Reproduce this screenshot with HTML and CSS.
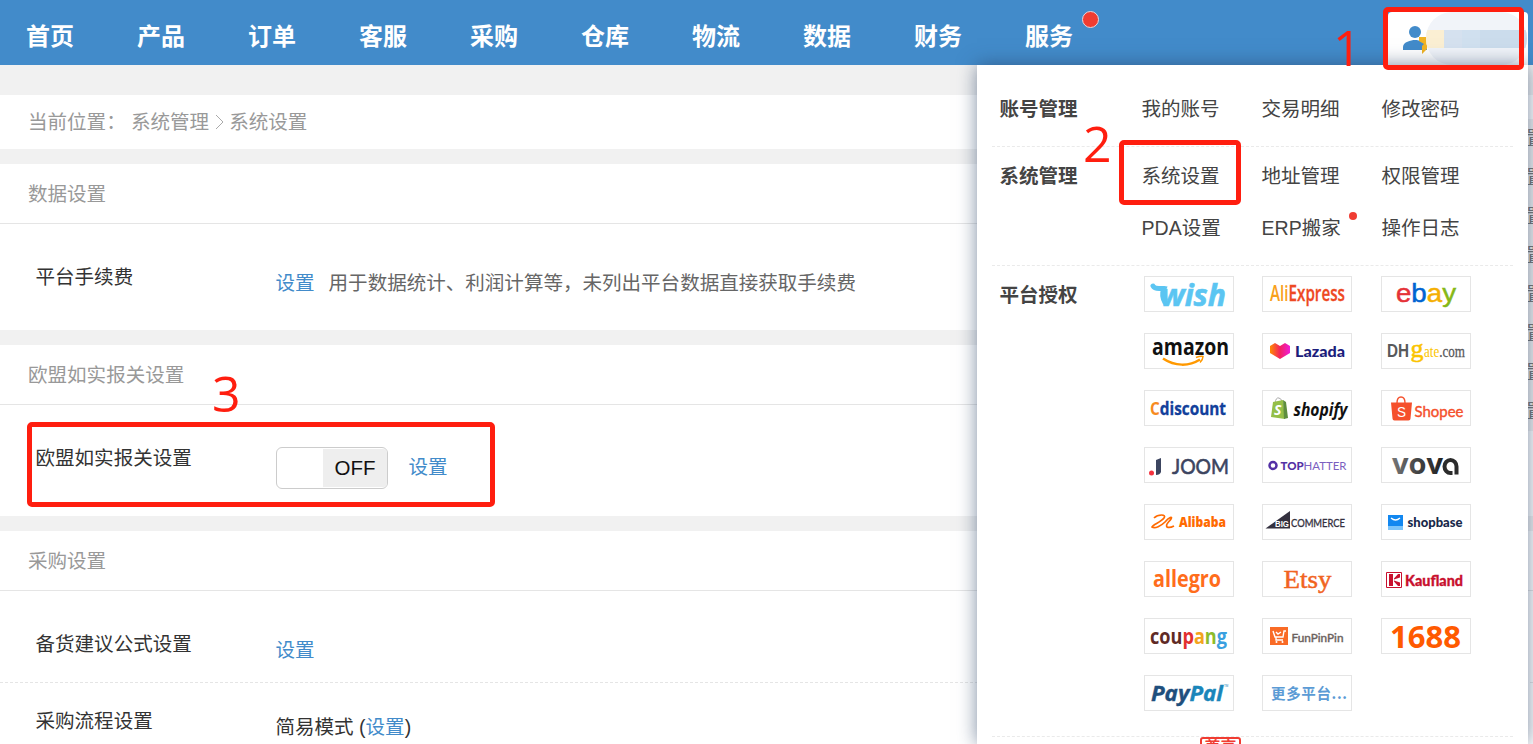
FILE: index.html
```html
<!DOCTYPE html>
<html lang="zh-CN">
<head>
  <meta charset="UTF-8">
  <meta name="viewport" content="width=device-width, initial-scale=1.0">
  <title>系统设置</title>
  <link rel="stylesheet" href="styles.css">
</head>
<body>
  <header class="navbar">
    <nav class="nav">
      <a>首页</a>
      <a>产品</a>
      <a>订单</a>
      <a>客服</a>
      <a>采购</a>
      <a>仓库</a>
      <a>物流</a>
      <a>数据</a>
      <a>财务</a>
      <a class="has-dot">服务</a>
    </nav>
    <div class="user">
      <svg class="user-icon" width="26" height="30" viewBox="0 0 26 30">
        <circle cx="12" cy="6" r="6" fill="#428bca"/>
        <path d="M0 24v-3c0-5 8-7 12-7s12 2 12 7v3z" fill="#428bca"/>
        <path d="M16 11h8v12l-5 5v-8l2-2-5-3z" fill="#f0b323"/>
      </svg>
      <div class="user-name">
        <i class="m1"></i><i class="m2"></i><i class="m3"></i><i class="m4"></i>
      </div>
    </div>
  </header>

  <main class="content">
    <div class="crumb">
      <span class="crumb-label">当前位置：</span>
      <span>系统管理</span>
      <svg width="9" height="16" viewBox="0 0 9 16"><path d="M1 1l7 7-7 7" fill="none" stroke="#aaa"/></svg>
      <span>系统设置</span>
    </div>

    <section class="card">
      <h2>数据设置</h2>
      <div class="row row-fee">
        <label>平台手续费</label>
        <div class="value"><a>设置</a><span class="hint">用于数据统计、利润计算等，未列出平台数据直接获取手续费</span></div>
      </div>
    </section>

    <section class="card">
      <h2>欧盟如实报关设置</h2>
      <div class="row row-eu">
        <label>欧盟如实报关设置</label>
        <div class="value">
          <div class="switch"><span>OFF</span></div>
          <a>设置</a>
        </div>
      </div>
    </section>

    <section class="card">
      <h2>采购设置</h2>
      <div class="row row-stock">
        <label>备货建议公式设置</label>
        <div class="value"><a>设置</a></div>
      </div>
      <div class="row row-flow">
        <label>采购流程设置</label>
        <div class="value">简易模式 (<a>设置</a>)</div>
      </div>
    </section>
  </main>

  <aside class="side">
    <span>置</span><span>置</span><span>置</span><span>置</span><span>置</span><span>置</span><span>置</span><span>置</span>
  </aside>

  <div class="menu">
    <div class="group group-account">
      <h3>账号管理</h3>
      <div class="links"><a>我的账号</a><a>交易明细</a><a>修改密码</a></div>
    </div>
    <div class="group group-system">
      <h3>系统管理</h3>
      <div class="links">
        <a>系统设置</a><a>地址管理</a><a>权限管理</a>
        <a>PDA设置</a><a class="has-dot small">ERP搬家</a><a>操作日志</a>
      </div>
    </div>
    <div class="group group-auth">
      <h3>平台授权</h3>
      <div class="logos">
        <a><svg viewBox="1 1 88 34">
          <path d="M9 10c2 4 7 2 11 2.500q-3 7 1 14" fill="none" stroke="#5bc5f2" stroke-width="5" stroke-linecap="round"/>
          <text class="os b i" x="17" y="30" font-size="30" textLength="65" lengthAdjust="spacingAndGlyphs" fill="#5bc5f2" stroke="#5bc5f2" stroke-width=".6">wish</text>
        </svg></a>
        <a><svg viewBox="1 1 88 34">
          <text class="os sb" x="8" y="25" font-size="21" textLength="75" lengthAdjust="spacingAndGlyphs" fill="#f9a11b" stroke-width=".3">Ali<tspan fill="#ee4923" stroke="#ee4923">Express</tspan></text>
        </svg></a>
        <a><svg viewBox="1 1 88 34">
          <text class="lib" x="15" y="26" font-size="26" stroke-width=".5" textLength="60" lengthAdjust="spacingAndGlyphs" fill="#e53238" stroke="#e53238">e<tspan fill="#0064d2" stroke="#0064d2">b</tspan><tspan fill="#f5af02" stroke="#f5af02">a</tspan><tspan fill="#86b817" stroke="#86b817">y</tspan></text>
        </svg></a>
        <a><svg viewBox="1 1 88 34">
          <text class="os b" x="8" y="22" font-size="23" textLength="77" lengthAdjust="spacingAndGlyphs" fill="#111">amazon</text>
          <path d="M19 25.500c12 8 26 8 37 1" fill="none" stroke="#f90" stroke-width="2.500"/>
          <path d="M52 24.500q5-2 7-1 0 3-3 6" fill="none" stroke="#f90" stroke-width="1.500"/>
        </svg></a>
        <a><svg viewBox="1 1 88 34">
          <defs><linearGradient id="lz"><stop offset="0" stop-color="#ff8a00"/><stop offset=".5" stop-color="#f4215f"/><stop offset="1" stop-color="#ee1bd8"/></linearGradient></defs>
          <path d="M8 13l5-3 5 3 5-3 5 3v7l-10 6-10-6z" fill="url(#lz)"/>
          <text class="lato bl" x="33" y="23.500" font-size="15.500" textLength="50" lengthAdjust="spacingAndGlyphs" fill="#1c1d7c">Lazada</text>
        </svg></a>
        <a><svg viewBox="1 1 88 34">
          <text class="lib b" x="6" y="23.500" font-size="19" textLength="22" lengthAdjust="spacingAndGlyphs" fill="#58595b">DH</text>
          <text class="serif" x="29.500" y="23.500" font-size="25" textLength="13" lengthAdjust="spacingAndGlyphs" fill="#fbc400" stroke="#fbc400" stroke-width=".5">g</text>
          <text class="serif" x="43" y="23.500" font-size="17" textLength="41" lengthAdjust="spacingAndGlyphs" fill="#fbc400" stroke-width=".3">ate<tspan fill="#58595b" stroke="#58595b">.com</tspan></text>
        </svg></a>
        <a><svg viewBox="1 1 88 34">
          <text class="os b" x="6" y="25" font-size="17.500" textLength="76" lengthAdjust="spacingAndGlyphs" fill="#f78b1f" stroke-width=".3">C<tspan fill="#12409b" stroke="#12409b">discount</tspan></text>
        </svg></a>
        <a><svg viewBox="1 1 88 34">
          <path d="M13 13q1-6 4-5t3 4" fill="none" stroke="#aaa"/>
          <path d="M11 12l10-2 2 19-14-2z" fill="#95bf47"/>
          <path d="M21 10l3 2 2 16-4 1z" fill="#5e8e3e"/>
          <text class="os b i" x="12" y="25" font-size="14" fill="#fff">S</text>
          <text class="os b i" x="31.500" y="25.500" font-size="18" textLength="54" lengthAdjust="spacingAndGlyphs" fill="#111">shopify</text>
        </svg></a>
        <a><svg viewBox="1 1 88 34">
          <path d="M16 13q0-6 4-6t4 6" fill="none" stroke="#f5502c" stroke-width="1.400"/>
          <path d="M10 12.500h21l-1.500 16q0 2-2 2h-14q-2 0-2-2z" fill="#f5502c"/>
          <text class="lib" x="16" y="27" font-size="14" textLength="9" lengthAdjust="spacingAndGlyphs" fill="#fff">S</text>
          <text class="lato" x="33.500" y="27" font-size="15" textLength="49" lengthAdjust="spacingAndGlyphs" fill="#f5502c" stroke="#f5502c" stroke-width=".4">Shopee</text>
        </svg></a>
        <a><svg viewBox="1 1 88 34">
          <circle cx="7.500" cy="26" r="2.500" fill="#f5333f"/>
          <path d="M12 13l5-2v14q-1 3-5 3z" fill="#3c4560"/>
          <text class="lato" x="28" y="27" font-size="21" textLength="57" lengthAdjust="spacingAndGlyphs" fill="#3c4560" stroke="#3c4560" stroke-width=".6">JOOM</text>
        </svg></a>
        <a><svg viewBox="1 1 88 34">
          <circle cx="11" cy="18.500" r="3.500" fill="none" stroke="#5330a5" stroke-width="2.500"/>
          <text class="lato bl" x="18.500" y="22.500" font-size="11.500" textLength="66" lengthAdjust="spacingAndGlyphs" fill="#5330a5">TOP<tspan class="thin" fill="#7b5fc0">HATTER</tspan></text>
        </svg></a>
        <a><svg viewBox="1 1 88 34">
          <defs><linearGradient id="vv"><stop offset="0" stop-color="#777"/><stop offset=".5" stop-color="#444"/><stop offset="1" stop-color="#222"/></linearGradient></defs>
          <text class="os b" x="11" y="27" font-size="28" textLength="51" lengthAdjust="spacingAndGlyphs" fill="url(#vv)">vov</text>
          <path d="M75.500 27.500v-8a6 6.500 0 1 0-6 6.500h2" fill="none" stroke="#2b2b2b" stroke-width="4"/>
        </svg></a>
        <a><svg viewBox="1 1 88 34">
          <path d="M10 14c4-4 13-4 10 0-3 4-12 7-12 9 3 2 9-1 13-5 4-5 8-6 6-3-2 3-6 5-4 8 2 1 5 0 7-1" fill="none" stroke="#ff6a00" stroke-width="1.700"/>
          <text class="os xb" x="35" y="23" font-size="13.500" textLength="47" lengthAdjust="spacingAndGlyphs" fill="#ff6a00">Alibaba</text>
        </svg></a>
        <a><svg viewBox="1 1 88 34">
          <path d="M3.500 24.500L28 7v17.500z" fill="#34313f"/>
          <text class="lib b" x="13" y="22.500" font-size="9" textLength="14" lengthAdjust="spacingAndGlyphs" fill="#fff">BIG</text>
          <text class="lato" x="29" y="22.500" font-size="10.500" textLength="54" lengthAdjust="spacingAndGlyphs" fill="#34313f" stroke="#34313f" stroke-width=".3">COMMERCE</text>
        </svg></a>
        <a><svg viewBox="1 1 88 34">
          <path d="M7 11h15v11H7z" fill="#1287f0"/>
          <path d="M7 22h15v4H7z" fill="#7cc4fa"/>
          <path d="M10 14q4.500 4 9 0" fill="none" stroke="#fff" stroke-width="1.300"/>
          <text class="lato bl" x="26.500" y="22.500" font-size="13" textLength="55" lengthAdjust="spacingAndGlyphs" fill="#18294a">shopbase</text>
        </svg></a>
        <a><svg viewBox="1 1 88 34">
          <text class="os b" x="9" y="25.500" font-size="22.500" textLength="68" lengthAdjust="spacingAndGlyphs" fill="#ff6d1b">allegro</text>
        </svg></a>
        <a><svg viewBox="1 1 88 34">
          <text class="serif" x="21.500" y="26.500" font-size="26" textLength="48" lengthAdjust="spacingAndGlyphs" fill="#f1641e" stroke="#f1641e" stroke-width=".5">Etsy</text>
        </svg></a>
        <a><svg viewBox="1 1 88 34">
          <path d="M5.500 11.500h15v15h-15z" fill="#fff" stroke="#c8102e"/>
          <path d="M8 13h4v12H8zM13 18.500v-1l4-4.500h2v3.500zM13 19.500l6 2V25h-2l-4-4.500z" fill="#c8102e"/>
          <text class="lato bl" x="24" y="25" font-size="14.500" textLength="58" lengthAdjust="spacingAndGlyphs" fill="#c8102e" stroke="#c8102e" stroke-width=".3">Kaufland</text>
        </svg></a>
        <a><svg viewBox="1 1 88 34">
          <text class="os b" x="6" y="26" font-size="21" textLength="77" lengthAdjust="spacingAndGlyphs" fill="#5f2a25">cou<tspan fill="#e2302f">p</tspan><tspan fill="#f3a41d">a</tspan><tspan fill="#8dbb2b">n</tspan><tspan fill="#3aa0e0">g</tspan></text>
        </svg></a>
        <a><svg viewBox="1 1 88 34">
          <path d="M8 9h18v18H8z" fill="#f96b26"/>
          <path d="M11 13l2 6h8l1-6h2M14 19v3h7M14 14l2 2 3-2" fill="none" stroke="#fff" stroke-width="1.400"/>
          <circle cx="14.500" cy="24" r="1" fill="#fff"/><circle cx="20.500" cy="24" r="1" fill="#fff"/>
          <text class="lato" x="29.500" y="23.500" font-size="11" textLength="52" lengthAdjust="spacingAndGlyphs" fill="#6b625e" stroke="#6b625e" stroke-width=".4">FunPinPin</text>
        </svg></a>
        <a><svg viewBox="1 1 88 34">
          <text class="os b" x="9" y="30" font-size="31" textLength="71" lengthAdjust="spacingAndGlyphs" fill="#ff5a00">1688</text>
        </svg></a>
        <a><svg viewBox="1 1 88 34">
          <text class="os b i" x="7" y="25.500" font-size="21.500" textLength="72" lengthAdjust="spacingAndGlyphs" fill="#1f4f7d" stroke="#1f4f7d" stroke-width=".4">Pay<tspan fill="#1a86ba" stroke="#1a86ba">Pal</tspan></text>
          <text class="lib" x="80" y="12" font-size="3" fill="#1a86ba">TM</text>
        </svg></a>
        <a><svg viewBox="1 1 88 34">
          <text class="cjk b" x="9" y="23.500" font-size="14.500" textLength="76" fill="#5b9bd5">更多平台...</text>
        </svg></a>
      </div>
    </div>
    <div class="group group-more"><span class="tag">尊享</span></div>
  </div>

  <div class="mark mark-1"></div>
  <div class="mark mark-2"></div>
  <div class="mark mark-3"></div>
  <div class="num num-1">1</div>
  <div class="num num-2">2</div>
  <div class="num num-3">3</div>
</body>
</html>
```
FILE: styles.css
```css
* {
  box-sizing: border-box;
}
body {
  margin: 0;
  height: 744px;
  overflow: hidden;
  position: relative;
  background: #f1f1f1;
  font-family: "Liberation Sans", "Noto Sans CJK SC", sans-serif;
  font-size: 19.55px;
  line-height: 30px;
  color: #333;
}
a {
  color: #428bca;
  text-decoration: none;
}
h2, h3 {
  margin: 0;
  font-size: 19.55px;
}

/* top bar */
.navbar {
  height: 65px;
  background: #428bca;
  display: flex;
  justify-content: space-between;
}
.nav {
  display: flex;
  gap: 63px;
  padding-left: 26px;
}
.nav a {
  position: relative;
  width: 48px;
  color: #fff;
  font-size: 24px;
  font-weight: bold;
  line-height: 74px;
}
.has-dot {
  position: relative;
}
.has-dot::after {
  content: "";
  position: absolute;
  width: 15px;
  height: 15px;
  right: -26px;
  top: 11px;
  border-radius: 50%;
  background: #f03c32;
  border: 1px solid #e8d5dc;
}
.user {
  margin: 12px 5px 0 0;
  width: 140px;
  height: 53px;
  background: #fff;
  border-radius: 4px 4px 0 0;
  display: flex;
  padding: 14px 0 0 15px;
}
.user-name {
  width: 101px;
  height: 53px;
  margin: -14px 0 0 -3px;
  border-radius: 26px;
  overflow: hidden;
  background: #f1f4f9;
  display: grid;
  grid-template-columns: 18px 18px 18px 1fr;
  padding: 18px 0 17px;
}
.m1 { background: #fbefd3; }
.m2 { background: #d5e1ef; }
.m3 { background: #d0e0ef; }
.m4 { background: #cbdcec; }

/* settings page */
.crumb {
  margin-top: 30px;
  height: 54px;
  padding-left: 28px;
  background: #fff;
  color: #999;
  display: flex;
  align-items: center;
}
.crumb-label {
  width: 103px;
}
.crumb svg {
  margin: 0 5px 0 6px;
}
.card {
  margin-top: 15px;
  background: #fff;
}
.card h2 {
  height: 60px;
  padding-left: 28px;
  border-bottom: 1px solid #e5e5e5;
  color: #999;
  font-weight: normal;
  line-height: 61px;
}
.row {
  display: flex;
  padding-left: 35.5px;
}
.row label {
  width: 240px;
}
.value {
  display: flex;
}
.hint {
  margin-left: 14px;
  color: #666;
}
.row-fee {
  height: 106px;
  padding-top: 38px;
}
.row-fee .value {
  padding-top: 6px;
}
.row-eu {
  height: 111px;
  padding-top: 38px;
}
.row-eu .value {
  padding-top: 4px;
}
.row-eu a {
  margin: 5px 0 0 21px;
}
.switch {
  width: 112px;
  height: 42px;
  border: 1px solid #ccc;
  border-radius: 6px;
  padding: 1px 0 1px 46px;
}
.switch span {
  display: block;
  height: 38px;
  padding-left: 12px;
  background: #eee;
  border-radius: 0 4px 4px 0;
  color: #111;
  font-size: 20.5px;
  line-height: 38px;
}
.row-stock {
  height: 92px;
  padding-top: 38px;
  border-bottom: 1px dashed #e5e5e5;
}
.row-stock .value,
.row-flow .value {
  padding-top: 6px;
}
.row-flow {
  height: 80px;
  padding-top: 23px;
}
.row-flow .value {
  white-space: pre;
}

/* right-hand anchor list, mostly behind the menu */
.side {
  position: absolute;
  right: 0;
  top: 119px;
  width: 5px;
  overflow: hidden;
  background: #f1f1f1;
}
.side span {
  display: block;
  height: 39px;
  margin-left: -2px;
  line-height: 39px;
  color: #777;
}

/* account dropdown */
.menu {
  position: absolute;
  left: 977px;
  top: 65px;
  width: 551px;
  height: 679px;
  padding: 0 15px;
  background: #fff;
  box-shadow: 0 0 18px rgba(40, 65, 100, .6);
}
.group {
  display: flex;
  padding-left: 7.5px;
  border-bottom: 1px dashed #eaeaea;
}
.group h3 {
  width: 142px;
  color: #444;
}
.links {
  display: grid;
  grid-template-columns: 120px 120px 120px;
  align-content: start;
  row-gap: 22px;
}
.links a {
  color: #444;
  white-space: nowrap;
}
.group-account {
  height: 82px;
  padding-top: 29px;
}
.group-system {
  height: 119px;
  padding-top: 14px;
}
.small::after {
  width: 8px;
  height: 8px;
  right: 25px;
  top: -1px;
  border: 0;
}
.group-auth {
  height: 471px;
  padding-top: 10px;
}
.group-auth h3 {
  width: 144.5px;
  padding-top: 4px;
}
.logos {
  display: grid;
  grid-template-columns: 118px 119px 90px;
  grid-auto-rows: 36px;
  row-gap: 21px;
}
.logos a {
  width: 90px;
  border: 1px solid #e5e5e5;
}
.logos svg {
  display: block;
  width: 88px;
  height: 34px;
}
.group-more {
  height: 7px;
  border: 0;
  overflow: hidden;
}
.tag {
  margin: 0 0 0 200.5px;
  height: 22px;
  padding: 0 2.5px;
  border: 2px solid #f03c32;
  border-radius: 3px;
  color: #f03c32;
  font-size: 16px;
  font-weight: bold;
  line-height: 18px;
}
.os { font-family: "Open Sans"; }
.lib { font-family: "Liberation Sans"; }
.lato { font-family: Lato; }
.serif { font-family: "Liberation Serif"; }
.cjk { font-family: "Noto Sans CJK SC"; }
.thin { font-weight: 400; }
.sb { font-weight: 600; }
.b { font-weight: 700; }
.xb { font-weight: 800; }
.bl { font-weight: 900; }
.i { font-style: italic; }

.links {
  row-gap: 22px;
}

/* step marks */
.mark {
  position: absolute;
  border: 5px solid #ff1e0f;
  border-radius: 5px;
}
.mark-1 {
  left: 1383px;
  top: 7px;
  width: 141px;
  height: 63px;
}
.mark-2 {
  left: 1119px;
  top: 140px;
  width: 122px;
  height: 65px;
}
.mark-3 {
  left: 27px;
  top: 422px;
  width: 468px;
  height: 85px;
}
.num {
  position: absolute;
  color: #ff1e0f;
  font-family: "Open Sans", sans-serif;
  font-size: 50px;
  line-height: 60px;
}
.num-1 {
  left: 1333px;
  top: 17px;
}
.num-2 {
  left: 1083px;
  top: 113px;
}
.num-3 {
  left: 212px;
  top: 363px;
}
```
